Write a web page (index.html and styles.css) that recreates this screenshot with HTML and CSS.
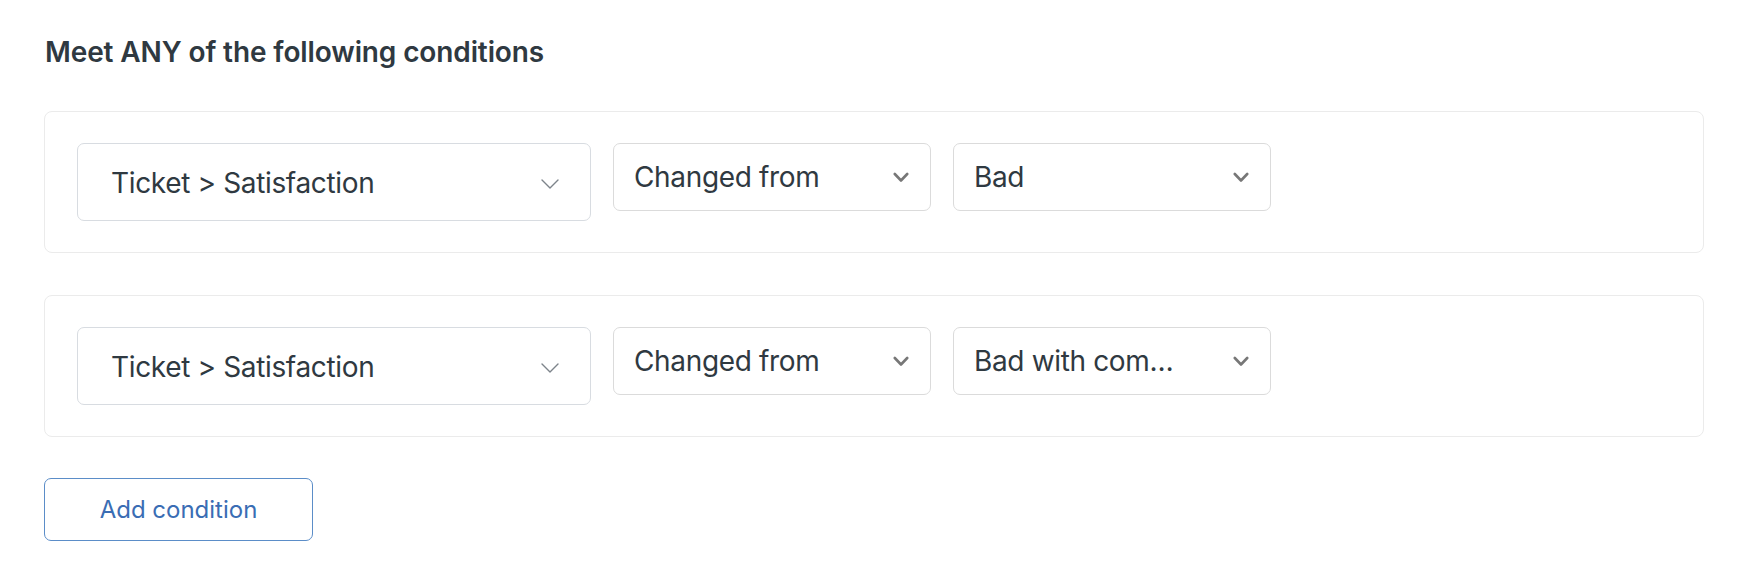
FILE: index.html
```html
<!DOCTYPE html>
<html lang="en">
<head>
<meta charset="utf-8">
<title>Conditions</title>
<link rel="stylesheet" href="styles.css">
</head>
<body>
<div class="page">
  <h2 class="title">Meet ANY of the following conditions</h2>

  <div class="card">
    <div class="row">
      <div class="select select-lg">
        <span class="label">Ticket &gt; Satisfaction</span>
        <svg class="chev-thin" width="18" height="10" viewBox="0 0 18 10"><polyline points="1,1 9,9 17,1" fill="none" stroke="#7d848b" stroke-width="1.4" stroke-linecap="round" stroke-linejoin="round"/></svg>
      </div>
      <div class="select select-sm">
        <span class="label">Changed from</span>
        <svg class="chev-bold" width="16" height="11" viewBox="0 0 16 11"><polyline points="1.8,2 8,8.5 14.2,2" fill="none" stroke="#777777" stroke-width="2.6" stroke-linecap="round" stroke-linejoin="round"/></svg>
      </div>
      <div class="select select-sm">
        <span class="label">Bad</span>
        <svg class="chev-bold" width="16" height="11" viewBox="0 0 16 11"><polyline points="1.8,2 8,8.5 14.2,2" fill="none" stroke="#777777" stroke-width="2.6" stroke-linecap="round" stroke-linejoin="round"/></svg>
      </div>
    </div>
  </div>

  <div class="card">
    <div class="row">
      <div class="select select-lg">
        <span class="label">Ticket &gt; Satisfaction</span>
        <svg class="chev-thin" width="18" height="10" viewBox="0 0 18 10"><polyline points="1,1 9,9 17,1" fill="none" stroke="#7d848b" stroke-width="1.4" stroke-linecap="round" stroke-linejoin="round"/></svg>
      </div>
      <div class="select select-sm">
        <span class="label">Changed from</span>
        <svg class="chev-bold" width="16" height="11" viewBox="0 0 16 11"><polyline points="1.8,2 8,8.5 14.2,2" fill="none" stroke="#777777" stroke-width="2.6" stroke-linecap="round" stroke-linejoin="round"/></svg>
      </div>
      <div class="select select-sm">
        <span class="label">Bad with com…</span>
        <svg class="chev-bold" width="16" height="11" viewBox="0 0 16 11"><polyline points="1.8,2 8,8.5 14.2,2" fill="none" stroke="#777777" stroke-width="2.6" stroke-linecap="round" stroke-linejoin="round"/></svg>
      </div>
    </div>
  </div>

  <button class="add-btn" type="button">Add condition</button>
</div>
</body>
</html>
```

FILE: styles.css
```css
* { box-sizing: border-box; }

html, body {
  margin: 0;
  padding: 0;
  background: #ffffff;
}

body {
  font-family: Inter, "Noto Sans", "Liberation Sans", sans-serif;
  color: #2f3941;
}

.page {
  padding: 34px 48px 0 44px;
  display: flex;
  flex-direction: column;
  align-items: stretch;
}

.title {
  margin: 0 0 41px 1px;
  font-size: 28px;
  line-height: 36px;
  font-weight: 600;
  letter-spacing: -0.12px;
  color: #2f3941;
}

.card {
  border: 1px solid #ebebeb;
  border-radius: 8px;
  padding: 31px 32px;
  margin-bottom: 42px;
  background: #fff;
}

.row {
  display: flex;
  align-items: flex-start;
  gap: 22px;
}

.select {
  display: flex;
  align-items: center;
  justify-content: space-between;
  background: #fff;
  border-radius: 7px;
  font-size: 28px;
  letter-spacing: -0.35px;
  color: #2f3941;
  white-space: nowrap;
}

.select-lg {
  width: 514px;
  height: 78px;
  border: 1.5px solid #d8dce1;
  padding: 0 31px 0 33px;
}

.select-lg .label {
  padding-top: 1px;
}

.select-sm {
  width: 318px;
  height: 68px;
  border: 1.5px solid #dbdbdb;
  padding: 0 21px 0 20px;
}

.chev-thin {
  display: block;
  margin-top: 4px;
}

.chev-bold {
  display: block;
  margin-top: 1px;
}

.add-btn {
  align-self: flex-start;
  width: 269px;
  height: 63px;
  border: 1.5px solid #5b8dc8;
  border-radius: 7px;
  background: #fff;
  color: #3a6db4;
  font-family: Inter, "Noto Sans", "Liberation Sans", sans-serif;
  font-size: 24px;
  padding: 0;
  margin: -1px 0 0 0;
}
```
